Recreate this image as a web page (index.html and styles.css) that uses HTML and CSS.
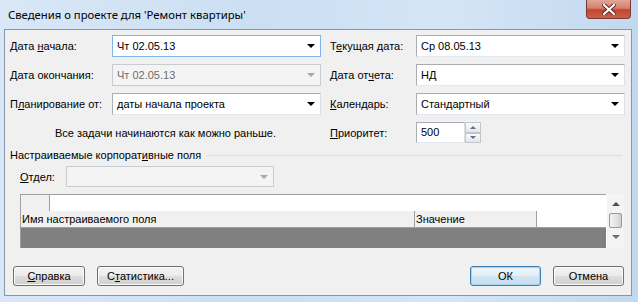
FILE: index.html
```html
<!DOCTYPE html>
<html lang="ru">
<head>
  <meta charset="UTF-8">
  <title>Сведения о проекте</title>
  <link rel="stylesheet" href="styles.css">
</head>
<body>
  <div class="window">
    <div class="titlebar">
      <span class="title">Сведения о проекте для 'Ремонт квартиры'</span>
      <div class="close-btn">
        <svg width="14" height="11" viewBox="0 0 14 11">
          <path d="M2 1 L12 10 M12 1 L2 10" stroke="#5a2420" stroke-width="4" stroke-linecap="square"/>
          <path d="M2 1 L12 10 M12 1 L2 10" stroke="#fff" stroke-width="2.2" stroke-linecap="square"/>
        </svg>
      </div>
    </div>

    <div class="client">
      <div class="fields">
        <label>Дата <u>н</u>ачала:</label>
        <div class="combo focused"><span>Чт 02.05.13</span><i class="arrow"></i></div>
        <label class="right">Т<u>е</u>кущая дата:</label>
        <div class="combo"><span>Ср 08.05.13</span><i class="arrow"></i></div>

        <label><u>Д</u>ата окончания:</label>
        <div class="combo disabled"><span>Чт 02.05.13</span><i class="arrow"></i></div>
        <label class="right">Дата от<u>ч</u>ета:</label>
        <div class="combo"><span>НД</span><i class="arrow"></i></div>

        <label>П<u>л</u>анирование от:</label>
        <div class="combo"><span>даты начала проекта</span><i class="arrow"></i></div>
        <label class="right"><u>К</u>алендарь:</label>
        <div class="combo"><span>Стандартный</span><i class="arrow"></i></div>

        <div class="note">Все задачи начинаются как можно раньше.</div>
        <label class="right"><u>П</u>риоритет:</label>
        <div class="spin">
          <div class="spin-box">500</div>
          <div class="spin-btns">
            <div class="spin-btn"><i class="tri-up"></i></div>
            <div class="spin-btn"><i class="tri-down"></i></div>
          </div>
        </div>
      </div>

      <div class="section">
        <span>Настраиваемые корпорат<u>и</u>вные поля</span>
        <div class="section-line"></div>
      </div>

      <div class="dept">
        <label><u>О</u>тдел:</label>
        <div class="combo disabled dept-combo"><span></span><i class="arrow"></i></div>
      </div>

      <div class="table">
        <div class="table-body">
          <div class="row-top">
            <div class="corner"></div>
          </div>
          <div class="row-head">
            <div class="head-cell name-col">Имя настраиваемого поля</div>
            <div class="head-cell value-col">Значение</div>
          </div>
          <div class="row-dark"></div>
        </div>
        <div class="scrollbar">
          <div class="sb-btn"><i class="sb-up"></i></div>
          <div class="sb-thumb"></div>
          <div class="sb-btn"><i class="sb-down"></i></div>
        </div>
      </div>

      <div class="buttons">
        <div class="btn-group">
          <button class="btn help-btn"><u>С</u>правка</button>
          <button class="btn stats-btn">С<u>т</u>атистика...</button>
        </div>
        <div class="btn-group">
          <button class="btn ok-btn">ОК</button>
          <button class="btn cancel-btn">Отмена</button>
        </div>
      </div>
    </div>
  </div>
</body>
</html>
```

FILE: styles.css
```css
body {
  margin: 0;
  padding: 0;
  width: 638px;
  height: 302px;
  overflow: hidden;
  font-family: "Liberation Sans", Arial, sans-serif;
  font-size: 11px;
  color: #000;
}
.window {
  width: 638px;
  height: 302px;
  display: flex;
  flex-direction: column;
  background: linear-gradient(to right, #d9e7f6 0%, #cbdff3 40%, #d4e5f6 70%, #c3d8ef 100%);
}
.titlebar {
  height: 29px;
  display: flex;
  justify-content: space-between;
  align-items: flex-start;
  padding: 0 7px 0 8px;
}
.title {
  font-family: "Noto Sans", sans-serif;
  font-size: 11.3px;
  line-height: 29px;
}
.close-btn {
  width: 43px;
  height: 18px;
  border: 1px solid #7a3a33;
  border-top: none;
  border-radius: 0 0 4px 4px;
  background: linear-gradient(#e3a597 0%, #d4806e 45%, #c2452f 55%, #c9614a 100%);
  display: flex;
  align-items: center;
  justify-content: center;
}
.client {
  flex: 1;
  margin: 0 6px 6px 4px;
  border: 1px solid #8796a8;
  background: #f0f0f0;
  display: flex;
  flex-direction: column;
}
.fields {
  margin-top: 5px;
  padding-left: 5px;
  display: grid;
  grid-template-columns: 102px 209px 95px 209px;
  grid-template-rows: 22px 22px 22px 21px;
  row-gap: 7px;
  align-items: center;
}
.fields label.right {
  padding-left: 9px;
}
.combo {
  height: 22px;
  box-sizing: border-box;
  border: 1px solid #abadb3;
  border-right-color: #dbdfe6;
  border-bottom-color: #e3e9ef;
  background: #fff;
  display: flex;
  align-items: center;
  justify-content: space-between;
  padding: 0 4px 0 4px;
}
.combo.focused {
  border-color: #7eb4ea;
}
.combo.disabled {
  background: #f4f4f4;
  border-color: #c9ccd0;
  color: #6d6d6d;
}
.arrow {
  width: 0;
  height: 0;
  border-left: 4px solid transparent;
  border-right: 4px solid transparent;
  border-top: 4px solid #000;
  margin-right: 1px;
}
.combo.disabled .arrow {
  border-top-color: #a6a6a6;
}
.note {
  grid-column: 1 / 3;
  text-align: center;
}
.spin {
  display: flex;
  height: 21px;
}
.spin-box {
  width: 49px;
  box-sizing: border-box;
  border: 1px solid #abadb3;
  border-right-color: #dbdfe6;
  border-bottom-color: #e3e9ef;
  background: #fff;
  padding-left: 4px;
  line-height: 19px;
}
.spin-btns {
  width: 16px;
  display: flex;
  flex-direction: column;
}
.spin-btn {
  flex: 1;
  box-sizing: border-box;
  border: 1px solid #c2c5ca;
  background: linear-gradient(#fafafa, #e6e6e6);
  display: flex;
  align-items: center;
  justify-content: center;
}
.tri-up, .tri-down, .sb-up, .sb-down {
  width: 0;
  height: 0;
  border-left: 3px solid transparent;
  border-right: 3px solid transparent;
}
.tri-up {
  border-bottom: 3px solid #58709a;
}
.tri-down {
  border-top: 3px solid #58709a;
}
.section {
  margin-top: 5px;
  padding: 0 9px 0 5px;
  height: 14px;
  display: flex;
  align-items: center;
  gap: 5px;
}
.section-line {
  flex: 1;
  height: 1px;
  background: #d5dfe5;
}
.dept {
  margin-top: 4px;
  padding-left: 15px;
  display: flex;
  align-items: center;
}
.dept label {
  width: 46px;
}
.dept-combo {
  width: 208px;
  height: 21px;
}
.table {
  margin: 7px 7px 0 15px;
  height: 54px;
  display: flex;
}
.table-body {
  flex: 1;
  border-top: 1px solid #a0a0a0;
  border-left: 1px solid #a0a0a0;
  display: flex;
  flex-direction: column;
  background: #fff;
}
.row-top {
  height: 16px;
  display: flex;
}
.corner {
  width: 28px;
  background: #f0f0f0;
  border-right: 1px solid #a0a0a0;
}
.row-head {
  height: 16px;
  display: flex;
  border-bottom: 1px solid #a0a0a0;
}
.head-cell {
  background: #f0f0f0;
  border-right: 1px solid #a0a0a0;
  line-height: 16px;
  padding-left: 1px;
  white-space: nowrap;
}
.name-col {
  width: 392px;
}
.value-col {
  width: 120px;
}
.row-dark {
  flex: 1;
  background: #808080;
}
.scrollbar {
  width: 17px;
  background: #f4f4f4;
  border-left: 1px solid #fff;
  display: flex;
  flex-direction: column;
  align-items: center;
  padding-top: 1px;
}
.sb-btn {
  height: 18px;
  display: flex;
  align-items: center;
  justify-content: center;
}
.sb-up {
  border-bottom: 4px solid #4d4d4d;
  border-left-width: 4px;
  border-right-width: 4px;
}
.sb-down {
  border-top: 4px solid #6d6d6d;
  border-left-width: 4px;
  border-right-width: 4px;
}
.sb-thumb {
  width: 13px;
  height: 15px;
  box-sizing: border-box;
  border: 1px solid #979797;
  border-radius: 2px;
  background: linear-gradient(to right, #f3f3f3, #e2e2e2 60%, #cfcfcf);
}
.buttons {
  margin-top: 18px;
  padding: 0 7px 0 8px;
  display: flex;
  justify-content: space-between;
}
.btn-group {
  display: flex;
  gap: 12px;
}
.btn {
  height: 20px;
  padding: 0;
  border: 1px solid #707070;
  border-radius: 3px;
  background: linear-gradient(#f2f2f2 0%, #ebebeb 50%, #dddddd 51%, #cfcfcf 100%);
  box-shadow: inset 0 0 0 1px #fbfbfb;
  font-family: "Liberation Sans", Arial, sans-serif;
  font-size: 11px;
  color: #000;
}
.help-btn {
  width: 72px;
}
.stats-btn {
  width: 87px;
}
.ok-btn {
  width: 71px;
  border-color: #3c7fb1;
  box-shadow: inset 0 0 0 1px #9fd6f3;
  background: linear-gradient(#eef6fb 0%, #e3eff8 50%, #d3e5f2 51%, #c8dcec 100%);
}
.cancel-btn {
  width: 71px;
}
```
